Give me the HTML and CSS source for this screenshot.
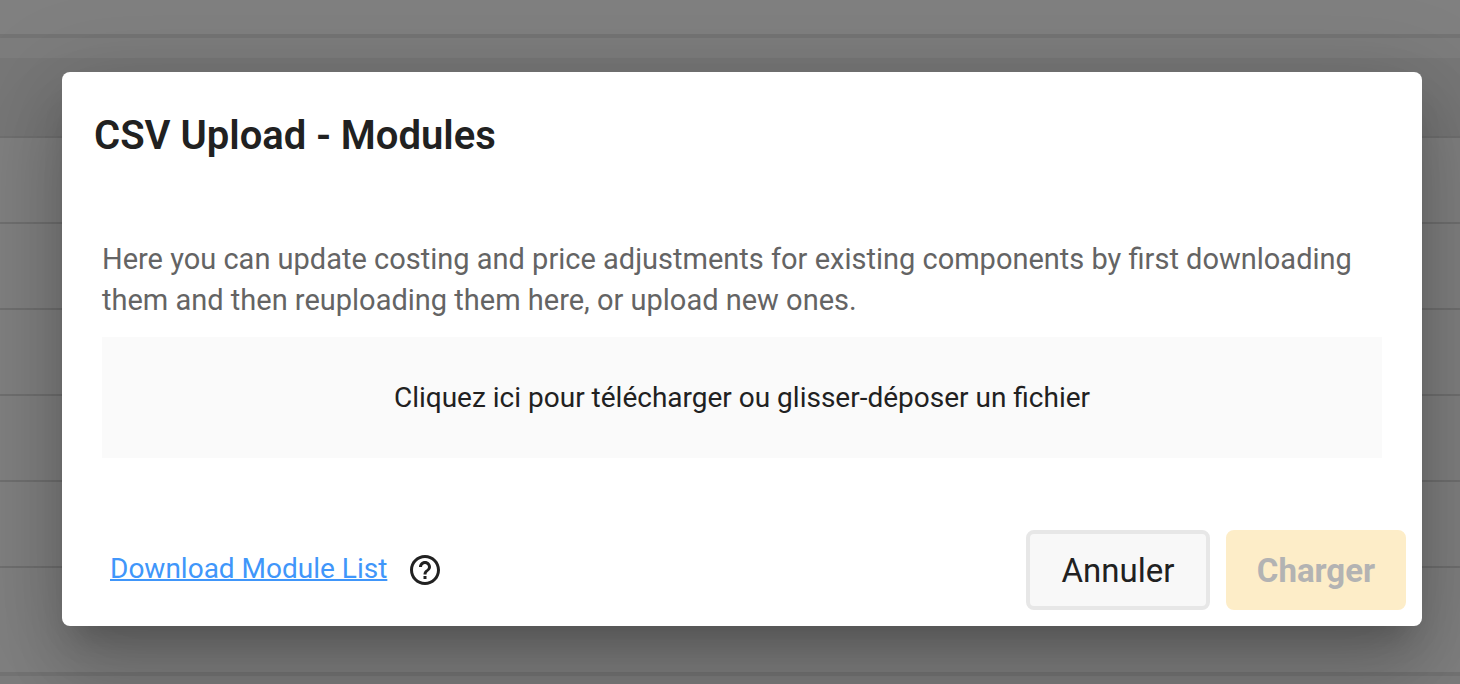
FILE: index.html
```html
<!DOCTYPE html>
<html lang="fr">
<head>
    <meta charset="UTF-8">
    <meta name="viewport" content="width=device-width, initial-scale=1">
    <title>CSV Upload - Modules</title>
    <link rel="stylesheet" href="styles.css">
</head>
<body>
    <div class="page" aria-hidden="true">
        <div class="topbar"></div>
        <div class="toolbar"></div>
        <div class="table-head"></div>
        <div class="row"></div>
        <div class="row"></div>
        <div class="row"></div>
        <div class="row"></div>
        <div class="row"></div>
        <div class="row last"></div>
    </div>
    <div class="overlay">
        <div class="dialog" role="dialog" aria-modal="true" aria-labelledby="title">
            <h2 id="title">CSV Upload - Modules</h2>
            <div class="content">
                <p>Here you can update costing and price adjustments for existing components by first downloading them and then reuploading them here, or upload new ones.</p>
                <button class="dropzone" type="button">Cliquez ici pour télécharger ou glisser-déposer un fichier</button>
            </div>
            <div class="actions">
                <a class="download" href="#">Download Module List</a>
                <svg class="help" viewBox="0 0 24 24" aria-hidden="true">
                    <path d="M11 18h2v-2h-2v2zm1-16C6.48 2 2 6.48 2 12s4.48 10 10 10 10-4.48 10-10S17.52 2 12 2zm0 18c-4.41 0-8-3.59-8-8s3.59-8 8-8 8 3.59 8 8-3.59 8-8 8zm0-14c-2.21 0-4 1.79-4 4h2c0-1.1.9-2 2-2s2 .9 2 2c0 2-3 1.75-3 5h2c0-2.25 3-2.5 3-5 0-2.21-1.79-4-4-4z"/>
                </svg>
                <button class="btn cancel" type="button">Annuler</button>
                <button class="btn upload" type="button" disabled>Charger</button>
            </div>
        </div>
    </div>
</body>
</html>
```

FILE: styles.css
```css
* {
    box-sizing: border-box;
}
body {
    margin: 0;
    background: #7d7d7d;
    font-family: Roboto, sans-serif;
    font-size: 28px;
    color: #212121;
    overflow: hidden;
}
.page {
    background: #808080;
}
.topbar {
    height: 38px;
    border-bottom: 4px solid #747474;
}
.toolbar {
    height: 20px;
    background: #7d7d7d;
}
.table-head {
    height: 80px;
    background: #777777;
    border-bottom: 2px solid #707070;
}
.row {
    height: 86px;
    border-bottom: 2px solid #707070;
}
.row.last {
    height: 108px;
    border-bottom: 4px solid #747474;
}
.overlay {
    position: absolute;
    top: 0;
    left: 0;
    width: 100%;
    min-height: 100vh;
    padding: 72px 38px 58px 62px;
}
.dialog {
    background: #ffffff;
    border-radius: 8px;
    box-shadow: 0 22px 30px -14px rgba(0, 0, 0, 0.2),
        0 48px 76px 6px rgba(0, 0, 0, 0.14),
        0 18px 92px 16px rgba(0, 0, 0, 0.12);
}
h2 {
    margin: 0;
    padding: 32px 32px 0;
    font-size: 40px;
    font-weight: 600;
    line-height: 64px;
}
.content {
    padding: 71px 40px 72px;
}
p {
    margin: 0 0 16px;
    font-size: 29px;
    line-height: 41px;
    color: #646464;
}
.dropzone {
    display: block;
    width: 100%;
    padding: 40px;
    border: none;
    background: #fafafa;
    color: #212121;
    font: inherit;
    line-height: 41px;
    cursor: pointer;
}
.actions {
    display: flex;
    align-items: center;
    gap: 16px;
    padding: 0 16px 16px 48px;
}
.download {
    margin-right: 4px;
    padding-bottom: 4px;
    color: #4096fa;
    text-decoration-thickness: 2px;
}
.help {
    width: 36px;
    height: 36px;
    margin-right: auto;
    fill: #212121;
}
.btn {
    height: 80px;
    min-width: 180px;
    padding: 0 24px;
    border: 4px solid #e7e7e7;
    border-radius: 8px;
    background: #f8f8f8;
    color: #212121;
    font-family: inherit;
    font-size: 33px;
    cursor: pointer;
}
.cancel {
    min-width: 184px;
}
.upload {
    border-color: #fdedc8;
    background: #fdedc8;
    color: #b3b3b3;
    font-weight: 700;
    cursor: default;
}
```
